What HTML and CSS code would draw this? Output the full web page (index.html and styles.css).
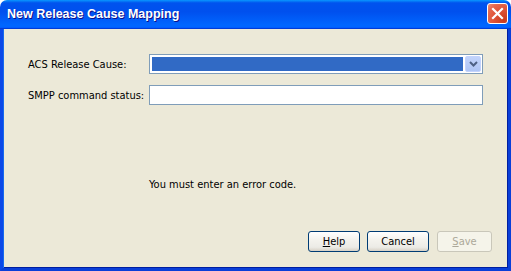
FILE: index.html
```html
<!DOCTYPE html>
<html>
<head>
<meta charset="utf-8">
<title>New Release Cause Mapping</title>
<link rel="stylesheet" href="styles.css">
</head>
<body>
<div class="window">
  <div class="titlebar">
    <span class="title">New Release Cause Mapping</span>
    <button class="close" aria-label="Close">
      <svg width="13" height="13" viewBox="0 0 13 13"><path d="M2 2 L11 11 M11 2 L2 11" stroke="#fff" stroke-width="2.2" stroke-linecap="square"/></svg>
    </button>
  </div>
  <div class="client">
    <div class="form">
      <label class="label">ACS Release Cause:</label>
      <div class="combo">
        <div class="combo-sel"></div>
        <div class="combo-btn">
          <svg width="9" height="6" viewBox="0 0 9 6"><path d="M1 1 L4.5 4.5 L8 1" fill="none" stroke="#4D6185" stroke-width="2"/></svg>
        </div>
      </div>
      <label class="label">SMPP command status:</label>
      <div class="textfield"></div>
    </div>
    <div class="message">You must enter an error code.</div>
    <div class="buttons">
      <button class="btn btn-help"><u>H</u>elp</button>
      <button class="btn btn-cancel">Cancel</button>
      <button class="btn btn-save" disabled><u>S</u>ave</button>
    </div>
  </div>
</div>
</body>
</html>
```
FILE: styles.css
```css
html, body {
  margin: 0;
  padding: 0;
  background: #ffffff;
}
.window {
  width: 511px;
  height: 271px;
  display: flex;
  flex-direction: column;
  font-family: "DejaVu Sans Condensed", "Liberation Sans", sans-serif;
  font-size: 11px;
  color: #000;
}
.titlebar {
  height: 29px;
  flex: none;
  box-sizing: border-box;
  border-radius: 7px 7px 0 0;
  background: linear-gradient(180deg, #0997ff 0, #0053ee 10%, #0050ee 40%, #0066ff 86%, #0066ff 92%, #005bff 95%, #003dd7 97%, #003dd7 100%);
  display: flex;
  align-items: center;
  padding: 0 3px 0 7px;
}
.title {
  flex: 1;
  color: #fff;
  font-family: "Liberation Sans", sans-serif;
  font-weight: bold;
  font-size: 12.5px;
  text-shadow: 1px 1px 0 #0f1089;
  margin-top: -1px;
}
.close {
  width: 21px;
  height: 21px;
  margin: -2px 0 0 0;
  padding: 0;
  box-sizing: border-box;
  border: 1px solid #fff;
  border-radius: 3px;
  background: radial-gradient(circle at 85% 85%, #c83a1c 0, #e0553a 50%, #e5684e 75%, #ef8f78 100%);
  display: flex;
  align-items: center;
  justify-content: center;
}
.close svg { display: block; }
.client {
  flex: 1;
  background: #ece9d8;
  border-left: 3px solid #0b48e8;
  border-right: 3px solid #0a3fd8;
  border-bottom: 3px solid #0a3fd8;
  box-shadow: inset 1px 0 0 #166aee, inset -1px 0 0 #001ea0, inset 0 -1px 0 #001ea0;
  display: flex;
  flex-direction: column;
  padding: 25px 25px 16px 25px;
}
.form {
  display: grid;
  grid-template-columns: 121px 1fr;
  row-gap: 11px;
  align-items: center;
}
.label {
  line-height: 13px;
}
.combo {
  height: 20px;
  box-sizing: border-box;
  border: 1px solid #7f9db9;
  background: #fff;
  display: flex;
  padding: 1px;
}
.combo-sel {
  flex: 1;
  margin: 1px 2px 1px 1px;
  background: #316ac5;
}
.combo-btn {
  width: 16px;
  box-sizing: border-box;
  border: 1px solid #c3d3fd;
  border-radius: 2px;
  background: linear-gradient(180deg, #c1d3fb 0, #b9cdf8 50%, #aec5f5 100%);
  display: flex;
  align-items: center;
  justify-content: center;
}
.combo-btn svg { display: block; }
.textfield {
  height: 20px;
  box-sizing: border-box;
  border: 1px solid #7f9db9;
  background: #fff;
}
.message {
  margin-top: 73px;
  margin-left: 121px;
  line-height: 13px;
}
.buttons {
  margin-top: auto;
  margin-right: -9px;
  display: flex;
  justify-content: flex-end;
  gap: 7px;
}
.btn {
  height: 21px;
  box-sizing: border-box;
  border: 1px solid #003c74;
  border-radius: 3px;
  background: linear-gradient(180deg, #ffffff 0, #f4f3ee 40%, #ecebe6 80%, #d6d0c5 100%);
  font-family: "DejaVu Sans Condensed", "Liberation Sans", sans-serif;
  font-size: 11px;
  color: #000;
  padding: 0;
  line-height: 19px;
}
.btn-help { width: 52px; }
.btn-cancel { width: 62px; }
.btn-save {
  width: 55px;
  margin-left: 1px;
  border-color: #c9c7ba;
  background: #f5f4ea;
  color: #aca899;
}
```
